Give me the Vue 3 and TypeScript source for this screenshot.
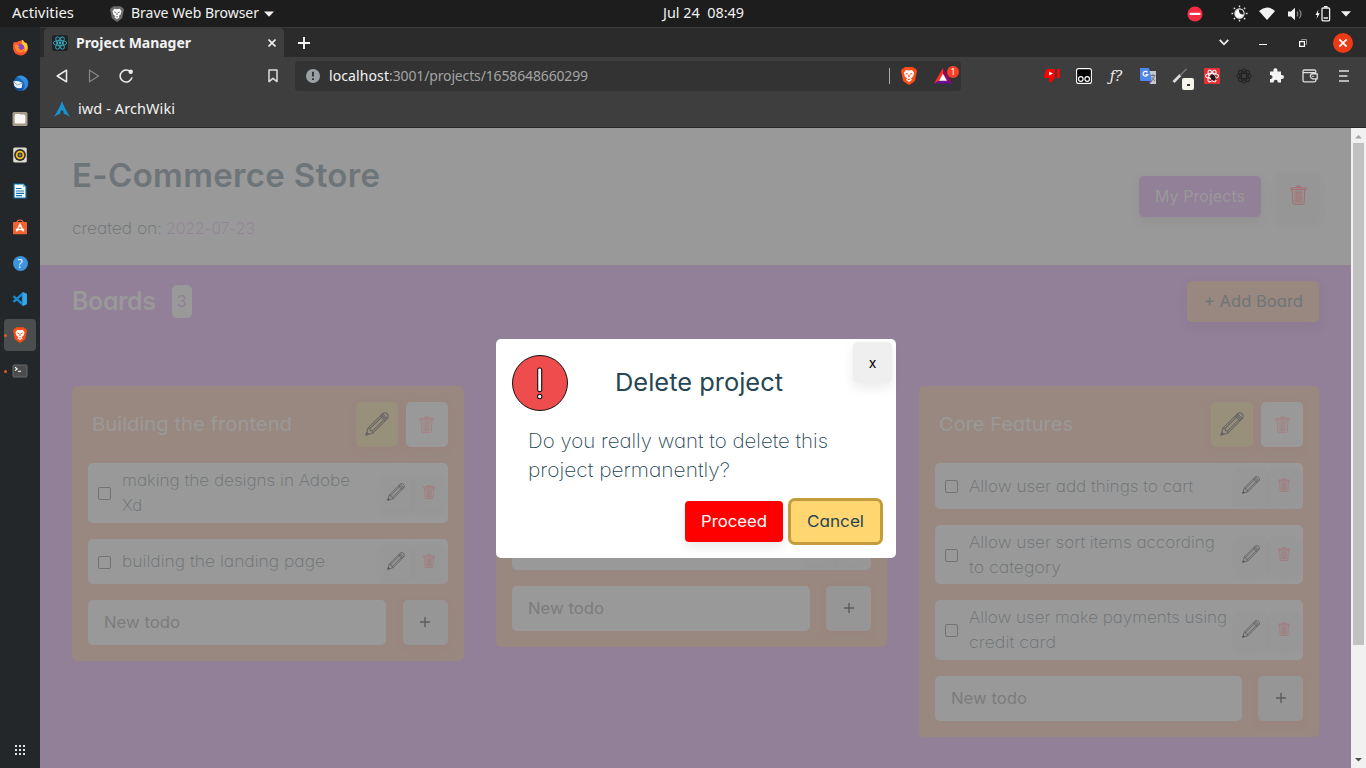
<script setup lang="ts">
interface Line { text: string; width: number }
interface Task { lines: Line[]; height: number }
interface Board { id: number; title: Line | null; tasks: Task[]; inputWidth: number }

const boards: Board[] = [
  {
    id: 1,
    title: { text: 'Building the frontend', width: 200 },
    inputWidth: 298,
    tasks: [
      { height: 60, lines: [{ text: 'making the designs in Adobe', width: 228 }, { text: 'Xd', width: 20 }] },
      { height: 45, lines: [{ text: 'building the landing page', width: 203 }] },
    ],
  },
  {
    id: 2,
    title: null,
    inputWidth: 298,
    tasks: [
      { height: 46, lines: [] },
      { height: 45, lines: [] },
    ],
  },
  {
    id: 3,
    title: { text: 'Core Features', width: 134 },
    inputWidth: 307,
    tasks: [
      { height: 46, lines: [{ text: 'Allow user add things to cart', width: 224 }] },
      { height: 59, lines: [{ text: 'Allow user sort items according', width: 246 }, { text: 'to category', width: 92 }] },
      { height: 60, lines: [{ text: 'Allow user make payments using', width: 258 }, { text: 'credit card', width: 87 }] },
    ],
  },
]

const vFit = {
  mounted(el: HTMLElement, binding: { value: number }) {
    const count = (el.textContent || '').length
    el.style.display = 'inline-block'
    const natural = el.getBoundingClientRect().width
    const ratio = binding.value / natural
    if (ratio > 1.02) {
      el.style.transformOrigin = '0 50%'
      el.style.transform = `scaleX(${ratio.toFixed(4)})`
      el.style.marginRight = `${(binding.value - natural).toFixed(2)}px`
    } else if (count > 1) {
      el.style.letterSpacing = `${((binding.value - natural) / (count - 1)).toFixed(3)}px`
    }
  },
}
</script>

<template>
  <div class="desktop">
    <svg class="defs" width="0" height="0">
      <symbol id="trash" viewBox="0 0 16 19">
        <g fill="none" stroke="currentColor" stroke-width=".9">
          <path d="M.6 4.3V3.2Q.6 2.6 1.3 2.6H14.7Q15.4 2.6 15.4 3.2V4.3ZM5.5 2.4Q5.6.7 8 .7T10.5 2.4M1.9 4.5 2.8 17.2Q2.9 18.3 3.9 18.3H12.1Q13.1 18.3 13.2 17.2L14.1 4.5" />
          <path d="M4.6 6.4 5 16.3H6.4L6.2 6.4ZM7.3 6.4V16.3H8.7V6.4ZM9.8 6.4 9.6 16.3H11L11.4 6.4Z" stroke-width=".6" />
        </g>
      </symbol>
      <symbol id="pencil" viewBox="0 0 24 24">
        <g fill="none" stroke="currentColor" stroke-width="1.05" stroke-linejoin="round">
          <path d="M1 23 3 16 17.4 1.8Q18.6.6 20 .8 22.8 1.4 23.2 4 23.4 5.4 22.2 6.6L8 21ZM3 16 5 16.6 5.4 18.6 7.4 19 8 21M5 16.6 17.2 4.6M7.4 19 19.4 7M15.2 4 20 8.8M16.4 2.8 21.2 7.6M17.6 1.8 22.2 6.4" />
          <path d="M1 23 1.8 20.3 3.7 22.2Z" fill="currentColor" />
        </g>
      </symbol>
      <symbol id="lion" viewBox="0 0 16 18">
        <path d="M4 0H12L13.6 1.6 15 1.8 16 4.6 15.4 6.4 14 13.4Q13.6 14.6 8 18 2.4 14.6 2 13.4L.6 6.4 0 4.6 1 1.8 2.4 1.6Z" fill="currentColor" />
        <path d="M5 3 8 3.5 11 3 13.2 5.8 11.9 9.8 9.8 11.3 11 12.7 8 15 5 12.7 6.2 11.3 4.1 9.8 2.8 5.8Z" fill="#fff" />
        <path d="M4.2 6 7 6.6 6.2 8ZM11.8 6 9 6.6 9.8 8ZM7.6 7.3H8.4L8.8 9.7 8 10.3 7.2 9.7ZM6.2 12.4 8 11.5 9.8 12.4 8 13Z" fill="currentColor" />
      </symbol>
    </svg>

    <header class="topbar">
      <span class="activities"><b v-fit="62">Activities</b></span>
      <svg class="lion-gray" width="14" height="16"><use href="#lion" /></svg>
      <span class="appname"><b v-fit="128">Brave Web Browser</b></span>
      <svg class="appcaret" width="10" height="6"><path d="M0 .5H10L5 5.8Z" fill="#f2f2f2" /></svg>
      <span class="clock"><b v-fit="81">Jul 24&nbsp; 08:49</b></span>
      <div class="tray">
        <span class="cell dnd"><svg width="16" height="16"><circle cx="8" cy="8" r="7.6" fill="#f22c42" /><rect x="2.6" y="6.8" width="10.8" height="2.2" fill="#fff" /></svg></span>
        <span class="cell"><svg width="17" height="17"><circle cx="8.5" cy="8.5" r="4.6" fill="none" stroke="#eee" stroke-width="1.1" /><path d="M8 4.5A4.2 4.2 0 1 0 12.5 9.5 4 4 0 0 1 8 4.5Z" fill="#fff" /><path d="M8.5 .5V2.2M8.5 14.8V16.5M.5 8.5H2.2M14.8 8.5H16.5M2.8 2.8 4 4M13 13 14.2 14.2M2.8 14.2 4 13M13 4 14.2 2.8" stroke="#ddd" stroke-width="1.4" /></svg></span>
        <span class="cell"><svg width="16" height="14"><path d="M0 4Q8-3 16 4L8 13Z" fill="#f4f4f4" /></svg></span>
        <span class="cell"><svg width="16" height="14"><path d="M1 4.5H4L8 .8V13.2L4 9.5H1Z" fill="#f4f4f4" /><path d="M10 4.6Q11.5 7 10 9.4M12.4 2.8Q15.5 7 12.4 11.2" fill="none" stroke="#888" stroke-width="1.2" /></svg></span>
        <span class="cell"><svg width="16" height="16"><path d="M3.5 3.5.5 9H2.4L1.4 13 4.8 7.2H2.8Z" fill="#fff" /><rect x="7" y="2" width="7.6" height="12.8" rx="1" fill="none" stroke="#eee" stroke-width="1.3" /><path d="M9 .7H12.6M8.6 12H13" stroke="#eee" stroke-width="1.6" /></svg></span>
        <span class="cell narrow"><svg width="10" height="6"><path d="M0 .3H10L5 5.6Z" fill="#f2f2f2" /></svg></span>
      </div>
    </header>

    <div class="workspace">
      <nav class="dock">
        <span class="app"><svg width="17" height="17"><circle cx="8.5" cy="9.2" r="7.3" fill="#ff5c2c" /><path d="M1 5Q2.5 2 3 3L5 4Q8 1 11 1L13 4Q17 7 15.6 11 13 17 8 16 1 15 1 5Z" fill="#ff552f" /><path d="M10 1Q11 .8 12 3L15 4.6Q17 11 12 13 14 8 10.5 6.2 9 3.5 10 1Z" fill="#ffcb2d" /><circle cx="8.5" cy="8.6" r="3.6" fill="#8b44c6" /><path d="M2.6 6Q5 4.5 7.5 7.4L6 8.4 8 10.4Q11 11.4 12.4 9 12.6 14 7.5 13.6 3 12 2.6 6Z" fill="#ff8c25" /><path d="M2 11Q5 15.8 10 14.8 6 17 2 11Z" fill="#ed275e" /></svg></span>
        <span class="app"><svg width="17" height="17"><circle cx="9" cy="8.5" r="7.5" fill="#1766bb" /><path d="M4 2Q10-2 15 4 18 12 11 15.6 15 10 10 5 7 2 4 2Z" fill="#368fe2" /><path d="M1.4 6.6Q6 5 10.4 8L9.6 13Q5 14 2.4 11Z" fill="#eef3f8" /><path d="M1.4 6.6 5.5 10 10.4 8" fill="none" stroke="#8aa5bc" /><path d="M2 11.5Q6 15.4 10.6 12.5L9 16Q4 16 2 11.5Z" fill="#154b94" /></svg></span>
        <span class="app"><svg width="16" height="16"><rect x=".5" y="1" width="15" height="14" rx="1.5" fill="#a69c87" /><rect x="2.6" y="3.6" width="10.8" height="9" rx="1.6" fill="#f7f6f3" /><path d="M3 3H8V5H3Z" fill="#f7f6f3" /></svg></span>
        <span class="app"><svg width="16" height="16"><rect x="1.2" y=".5" width="13.6" height="15" rx="1.6" fill="#dedbd0" /><circle cx="8" cy="8" r="5.9" fill="#302f2d" /><circle cx="8" cy="8" r="3.4" fill="none" stroke="#f4bd20" stroke-width="1.8" /><circle cx="8" cy="8" r="1.5" fill="#777" /></svg></span>
        <span class="app"><svg width="16" height="16"><path d="M2 1H11L14 4V15H2Z" fill="#fff" stroke="#0870af" stroke-width="1.2" /><path d="M11 .5V4H14.5Z" fill="#68b4de" /><path d="M4 5.5H9.5M4 8H12M4 10.3H12M4 12.6H10" stroke="#0870af" stroke-width="1.2" /></svg></span>
        <span class="app"><svg width="16" height="16"><path d="M4.5 4Q5 1 8 1T11.5 4" fill="none" stroke="#e86a40" stroke-width="1.2" /><rect x="1" y="3" width="14" height="12.2" rx="1" fill="#f26332" /><path d="M4.5 12.5 8 5.5 11.5 12.5M3.8 10.4H12.2" fill="none" stroke="#fff" stroke-width="1.5" /></svg></span>
        <span class="app"><i class="help">?</i></span>
        <span class="app"><svg width="16" height="16"><path d="M1.4 10.8 11 2.4V13.6L1.4 5.2" fill="none" stroke="#168bd0" stroke-width="2.4" stroke-linejoin="round" /><path d="M10.8 1V15L14.9 13.3V2.7Z" fill="#35a7ee" /></svg></span>
        <span class="app active"><svg class="lion-orange" width="14" height="16"><use href="#lion" /></svg></span>
        <span class="app running"><svg width="16" height="14"><rect x="1" y="1" width="14" height="12" rx="1" fill="#4c4c4c" stroke="#686868" /><path d="M3 3.2 5.2 4.9 3 6.6M6 7.2H9" fill="none" stroke="#fff" stroke-width="1.1" /></svg></span>
        <svg class="launcher" width="10" height="10" fill="#e2e2e2"><path d="M0 0h2v2H0zM4 0h2v2H4zM8 0h2v2H8zM0 4h2v2H0zM4 4h2v2H4zM8 4h2v2H8zM0 8h2v2H0zM4 8h2v2H4zM8 8h2v2H8z" /></svg>
      </nav>

      <div class="browser">
        <div class="tabs">
          <div class="tab">
            <svg width="16" height="16"><rect width="16" height="16" rx="2" fill="#202428" /><g fill="none" stroke="#3aa5b8" stroke-width=".9"><ellipse cx="8" cy="8" rx="6.8" ry="2.6" /><ellipse cx="8" cy="8" rx="6.8" ry="2.6" transform="rotate(60 8 8)" /><ellipse cx="8" cy="8" rx="6.8" ry="2.6" transform="rotate(120 8 8)" /></g><circle cx="8" cy="8" r="1.4" fill="#3aa5b8" /></svg>
            <span class="tabname"><b v-fit="115">Project Manager</b></span>
            <svg class="tabclose" width="8" height="8"><path d="M.5.5 7.5 7.5M7.5.5.5 7.5" stroke="#eee" stroke-width="1.6" /></svg>
          </div>
          <svg class="newtab" width="12" height="12"><path d="M6 0V12M0 6H12" stroke="#fff" stroke-width="1.8" /></svg>
          <div class="winbtns">
            <span class="chevron"><svg width="10" height="7"><path d="M.7.8 5 5.3 9.3.8" fill="none" stroke="#eee" stroke-width="1.8" /></svg></span>
            <span class="minimise"><svg width="8" height="2"><rect width="8" height="1" fill="#fff" /></svg></span>
            <span><svg width="8" height="8"><path d="M2.5 1.5V.5H7.5V5.5H6.5" fill="none" stroke="#999" /><rect x=".6" y="2.6" width="4.8" height="4.8" fill="none" stroke="#fff" stroke-width="1.2" /></svg></span>
            <span><svg width="20" height="20"><circle cx="10" cy="10" r="10" fill="#f03a17" /><path d="M6.3 6.3 13.7 13.7M13.7 6.3 6.3 13.7" stroke="#fff" stroke-width="1.7" /></svg></span>
          </div>
        </div>

        <div class="toolbar">
          <span class="tool"><svg width="12" height="14"><path d="M10.5 1.2V12.8L1.2 7Z" fill="none" stroke="#eee" stroke-width="1.5" stroke-linejoin="round" /></svg></span>
          <span class="tool"><svg width="12" height="14"><path d="M1.5 1.2V12.8L10.5 7Z" fill="none" stroke="#888" stroke-width="1.2" stroke-linejoin="round" /></svg></span>
          <span class="tool"><svg width="14" height="14"><path d="M12 3.5A6 6 0 1 0 13 8.4" fill="none" stroke="#eee" stroke-width="1.5" /><circle cx="11.7" cy="2.8" r="2.2" fill="#eee" /></svg></span>
          <span class="tool mark"><svg width="10" height="14"><path d="M1 1H9V12.6L5 9.3 1 12.6Z" fill="none" stroke="#ddd" stroke-width="1.5" stroke-linejoin="round" /></svg></span>
          <div class="urlbar">
            <svg width="14" height="14"><circle cx="7" cy="7" r="7" fill="#9aa0a6" /><path d="M7 2.8V7.6M7 9.2V11" stroke="#333" stroke-width="1.9" /></svg>
            <span class="url"><b class="host" v-fit="60">localhost</b><b v-fit="199">:3001/projects/1658648660299</b></span>
            <i class="divider" />
            <svg class="lion-orange shield" width="16" height="18"><use href="#lion" /></svg>
            <span class="bat"><svg width="18" height="16"><path d="M9 0 0 15.5 5 13 9 6Z" fill="#ff3020" /><path d="M9 0 18 15.5 13 13 9 6Z" fill="#a00068" /><path d="M0 15.5 5 12.7H13L18 15.5Z" fill="#68109a" /><path d="M9 5.8 5 12.8H13Z" fill="#fff" /></svg><em>1</em></span>
          </div>
          <div class="extensions">
            <span><svg width="16" height="15"><path d="M3 1H11V9.5L7 14.5Q4 15 5.5 10H1Q-.5 8 1.5 3Z" fill="#f00" /><path d="M5 3.5 9 5.5 5 7.6Z" fill="#fff" /><rect x="13" y="1" width="3" height="9" fill="#f00" /></svg></span>
            <span><svg width="16" height="16"><rect x=".6" y=".6" width="14.8" height="14.8" rx="2" fill="#000" stroke="#fff" stroke-width="1.1" /><g fill="none" stroke="#fff" stroke-width="1.2"><circle cx="4.8" cy="11" r="2.3" /><circle cx="11.2" cy="11" r="2.3" /></g></svg></span>
            <span><i class="fq">ƒ?</i></span>
            <span><svg width="16" height="16"><path d="M7 3H16V16H10Z" fill="#c6c9ca" /><path d="M0 0H9L12 13H1Q0 13 0 12Z" fill="#4f87ed" /><path d="M9 13H12L9.5 16Z" fill="#6140c0" /><path d="M7.5 4.4A2.4 2.4 0 1 0 7.8 6.6H5.6" fill="none" stroke="#fff" stroke-width="1.2" /><path d="M10.5 7.5H15.5M13 6V7.5M14.6 7.5Q14 11 11.5 13M11.8 9 14.8 13" stroke="#64737d" fill="none" stroke-width=".9" /></svg></span>
            <span class="probe"><svg width="16" height="16"><path d="M1.5 14 8.5 7" stroke="#ddd" stroke-width="2.6" /><path d="M8 7.5 14.5 1" stroke="#777" stroke-width="1.6" /></svg><em /></span>
            <span><svg width="16" height="16"><rect width="16" height="16" rx="1" fill="#e72e34" /><g fill="none" stroke="#fff" stroke-width="1.1"><ellipse cx="8" cy="8" rx="6.5" ry="2.5" /><ellipse cx="8" cy="8" rx="6.5" ry="2.5" transform="rotate(60 8 8)" /><ellipse cx="8" cy="8" rx="6.5" ry="2.5" transform="rotate(120 8 8)" /></g><ellipse cx="9" cy="9.5" rx="2.3" ry="3.2" fill="#241a1a" transform="rotate(-30 9 9.5)" /><path d="M5.5 8.5 13 11.5M6.5 13 12 6.5" stroke="#241a1a" /></svg></span>
            <span><svg width="16" height="16"><g fill="none" stroke="#202020" stroke-width="1"><ellipse cx="8" cy="8" rx="7.3" ry="2.8" /><ellipse cx="8" cy="8" rx="7.3" ry="2.8" transform="rotate(45 8 8)" /><ellipse cx="8" cy="8" rx="7.3" ry="2.8" transform="rotate(90 8 8)" /><ellipse cx="8" cy="8" rx="7.3" ry="2.8" transform="rotate(135 8 8)" /></g></svg></span>
            <span><svg width="15" height="15"><path d="M1 3.5H4.5Q4 .3 6.4.3T8.4 3.5H12V7Q15 6.6 15 9T12 11V14.5H8.7Q9 11.8 6.8 11.8T4.6 14.5H1V11Q3.6 11 3.6 9T1 7Z" fill="#f4f4f4" /></svg></span>
            <span class="wallet"><svg width="16" height="14"><path d="M13.8 3.5V2.4Q13.8 1 12.4 1H2.5Q1 1 1 2.4V11.4Q1 12.8 2.4 12.8H12.4Q13.8 12.8 13.8 11.4V10.2M1.5 3.6H12.4Q13.8 3.6 13.8 4.6M15.2 4.8H10.4Q8.4 4.8 8.4 7.1T10.4 9.8H15.2ZM10.2 7.3H11.6" fill="none" stroke="#ddd" stroke-width="1.3" /></svg></span>
            <span><svg width="10" height="12"><path d="M0 1H10M0 6H8.5M0 11H10" stroke="#ddd" stroke-width="1.7" /></svg></span>
          </div>
        </div>

        <div class="bookmarks">
          <svg width="16" height="16"><path d="M8 0Q6.5 5 0 16 4 13.2 6.3 12.8 6.2 9.4 8 9.2T9.7 12.8Q12 13.2 16 16 9.5 5 8 0Z" fill="#1793d1" /></svg>
          <span><b v-fit="97">iwd - ArchWiki</b></span>
        </div>

        <div class="viewport">
          <main class="page">
            <section class="project">
              <div class="about">
                <h1><span v-fit="308">E-Commerce Store</span></h1>
                <p><span v-fit="90">created on:</span><span class="date" v-fit="89">2022-07-23</span></p>
              </div>
              <button class="btn purple"><span v-fit="90">My Projects</span></button>
              <button class="bin"><svg width="17" height="20"><use href="#trash" /></svg></button>
            </section>

            <section class="boards">
              <div class="boardbar">
                <h2><span v-fit="84">Boards</span></h2>
                <span class="count">3</span>
                <button class="btn tan"><span v-fit="99">+ Add Board</span></button>
              </div>
              <div class="grid">
                <article v-for="board in boards" :key="board.id" class="board">
                  <div class="boardhead">
                    <h3><span v-if="board.title" v-fit="board.title.width">{{ board.title.text }}</span></h3>
                    <button class="square edit"><svg width="24" height="24"><use href="#pencil" /></svg></button>
                    <button class="square"><svg width="15" height="17"><use href="#trash" /></svg></button>
                  </div>
                  <div v-for="(task, i) in board.tasks" :key="i" class="task" :style="{ height: `${task.height}px` }">
                    <i class="check" />
                    <div class="lines">
                      <span v-for="line in task.lines" :key="line.text" v-fit="line.width">{{ line.text }}</span>
                    </div>
                    <i class="small pen"><svg width="18" height="18"><use href="#pencil" /></svg></i>
                    <i class="small del"><svg width="12" height="14"><use href="#trash" /></svg></i>
                  </div>
                  <div class="add">
                    <div class="field" :style="{ width: `${board.inputWidth}px` }"><span v-fit="76">New todo</span></div>
                    <button class="plus"><svg width="10" height="10"><path d="M5 0V10M0 5H10" stroke="#5c5c5c" stroke-width="1.4" /></svg></button>
                  </div>
                </article>
              </div>
            </section>
          </main>

          <div class="scrollbar">
            <svg width="15" height="15"><path d="M4 10.5H11L7.5 7Z" fill="#a3a3a3" /></svg>
            <i class="thumb" />
            <svg class="down" width="15" height="15"><path d="M4 5H11L7.5 8.5Z" fill="#505050" /></svg>
          </div>

          <div class="overlay">
            <div class="modal" role="dialog">
              <button class="close">x</button>
              <div class="modalhead">
                <svg width="56" height="56"><circle cx="28" cy="28" r="27.5" fill="#ef4d4d" stroke="#111" /><rect x="25.7" y="13" width="4" height="23.6" rx="1.6" fill="#fff" stroke="#111" stroke-width="1.1" /><circle cx="27.7" cy="41.5" r="2.2" fill="#fff" stroke="#111" stroke-width="1.1" /></svg>
                <h4><span v-fit="168">Delete project</span></h4>
              </div>
              <p class="ask">
                <span v-fit="300">Do you really want to delete this</span>
                <span v-fit="202">project permanently?</span>
              </p>
              <div class="actions">
                <button class="proceed"><span v-fit="66">Proceed</span></button>
                <button class="cancel"><span v-fit="57">Cancel</span></button>
              </div>
            </div>
          </div>
        </div>
      </div>
    </div>
  </div>
</template>

<style>
body { margin: 0; overflow: hidden; }
</style>

<style scoped>
* { box-sizing: border-box; margin: 0; padding: 0; }
.desktop { width: 1366px; height: 768px; overflow: hidden; display: flex; flex-direction: column; background: #1d1d1d; font-family: "Noto Sans", "Open Sans", sans-serif; font-size: 14.5px; color: #f2f2f2; }
svg { display: block; flex: none; }
.defs { position: absolute; }
button { border: 0; font: inherit; font-feature-settings: inherit; display: flex; align-items: center; justify-content: center; flex: none; }
b { display: inline-block; font-weight: 400; white-space: pre; }
.lion-orange { color: #fb4d17; }

.topbar { height: 27px; flex: none; display: flex; align-items: center; padding-left: 12px; line-height: 25px; font-size: 14px; }
.activities { width: 98px; height: 27px; }
.lion-gray { color: #6b6b6b; margin-right: 7px; }
.appname { width: 128px; height: 27px; }
.appcaret { margin: 1px 0 0 5px; }
.clock { margin-left: 389px; height: 27px; }
.tray { margin-left: auto; display: flex; padding-right: 11px; }
.cell { width: 28px; height: 26px; display: flex; align-items: center; justify-content: center; }
.cell.narrow { width: 18px; }
.dnd { margin-right: 16px; }

.workspace { flex: 1; display: flex; min-height: 0; }
.dock { width: 40px; background: #232729; display: flex; flex-direction: column; align-items: center; gap: 4px; padding-top: 4px; }
.app { position: relative; width: 32px; height: 32px; flex: none; display: flex; align-items: center; justify-content: center; border-radius: 4px; }
.active { background: #4b4e4e; }
.active::before, .running::before { content: ""; position: absolute; left: 0; top: 15px; width: 3px; height: 3px; border-radius: 2px; background: #e95420; }
.help { width: 15px; height: 15px; border-radius: 8px; background: #3b94dc; color: #fff; text-align: center; font: 12px/15px "Open Sans", sans-serif; }
.launcher { margin: auto 0 13px; }

.browser { width: 1326px; display: flex; flex-direction: column; background: #3e3e3e; }
.tabs { height: 30px; flex: none; display: flex; align-items: center; background: #2b2b2b; border-top: 1px solid #3b3b3b; padding-left: 4px; }
.tab { width: 240px; height: 29px; display: flex; align-items: center; background: #3e3e3e; border-radius: 4px 4px 0 0; padding-left: 8px; }
.tabname { margin-left: 8px; height: 28px; line-height: 26px; }
.tabname b { font-weight: 700; font-size: 14px; }
.tabclose { margin: 0 8px 0 auto; }
.newtab { margin-left: 14px; }
.winbtns { margin-left: auto; display: flex; padding-right: 3px; }
.winbtns span { width: 40px; height: 29px; display: flex; align-items: center; justify-content: center; }
.winbtns .chevron { padding-left: 2px; }
.minimise svg { margin-top: 4px; }

.toolbar { height: 37px; flex: none; display: flex; align-items: center; padding-left: 6px; }
.tool { width: 32px; display: flex; justify-content: center; }
.mark { margin: 0 6px 0 115px; }
.urlbar { width: 666px; height: 30px; display: flex; align-items: center; background: #333; border-radius: 4px; padding-left: 11px; }
.url { margin-left: 9px; font-size: 14px; line-height: 30px; color: #a4a4a4; white-space: nowrap; }
.url .host { color: #f4f4f4; }
.divider { width: 1px; height: 16px; background: #aaa; margin-left: auto; }
.shield { margin: 0 17px 0 11px; }
.bat { position: relative; margin-right: 9px; }
.bat em { position: absolute; left: 13px; top: -2px; width: 12px; height: 12px; border-radius: 6px; background: #fb4029; color: #fff; font: 9px/12px "Noto Sans", sans-serif; text-align: center; }
.extensions { margin-left: auto; display: flex; padding-right: 6px; }
.extensions span { position: relative; width: 32px; height: 20px; display: flex; align-items: center; justify-content: center; }
.extensions .wallet { width: 36px; }
.fq { font: italic 17px/18px "DejaVu Serif", serif; font-size: 14px; color: #eee; }
.probe em { position: absolute; left: 18px; top: 12px; width: 12px; height: 12px; border-radius: 2px; background: #f7f5ec; }
.probe em::after { content: ""; position: absolute; left: 5px; top: 6px; width: 3px; height: 2px; background: #333; }
.bookmarks { height: 34px; flex: none; display: flex; align-items: flex-start; border-bottom: 1px solid #272727; padding: 7px 0 0 14px; }
.bookmarks span { margin: -3px 0 0 8px; line-height: 20px; }

.viewport { position: relative; flex: 1; display: flex; font-family: Inter, "Open Sans", sans-serif; font-feature-settings: "cv11"; font-size: 16px; }
.page { width: 1311px; background: #927f98; }
.page span, .modal span { white-space: nowrap; }
.project { height: 137px; background: #999; padding: 22px 32px 0; display: flex; align-items: flex-start; }
h1 { font-size: 33px; line-height: 50px; font-weight: 600; color: #6e7579; }
.about p { margin-top: 16px; line-height: 24px; font-size: 16px; font-weight: 200; color: #6e7375; display: flex; gap: 4px; }
.date { color: #927f98; }
.btn { height: 41px; padding-bottom: 1px; border-radius: 5px; box-shadow: 0 5px 12px rgba(90, 90, 90, .1); }
.purple { width: 122px; margin: 26px 16px 0 auto; background: #927f98; color: #999; }
.bin { width: 42px; height: 46px; margin-top: 24px; padding-bottom: 4px; border-radius: 5px; background: #969696; box-shadow: 0 4px 10px rgba(90, 90, 90, .07); color: #a8696c; }
.boards { padding: 16px 32px 0; }
.boardbar { height: 41px; display: flex; align-items: center; }
h2 { font-size: 25px; line-height: 40px; font-weight: 600; color: #999; padding-bottom: 2px; }
.count { width: 20px; height: 33px; line-height: 32px; margin-left: 16px; border-radius: 5px; background: #999; color: #927f98; text-align: center; }
.tan { width: 132px; margin-left: auto; background: #99887f; color: #6e7579; }
.grid { margin-top: 64px; display: grid; grid-template-columns: 391.5px 391.5px 400px; gap: 32px; align-items: start; }
.board { background: #99887f; border-radius: 5px; padding: 16px; display: flex; flex-direction: column; gap: 16px; }
.boardhead { height: 45px; display: flex; align-items: center; gap: 8px; }
h3 { flex: 1; padding-left: 4px; font-size: 19px; line-height: 45px; font-weight: 400; color: #999; }
.square { width: 42px; height: 45px; border-radius: 5px; background: #999; color: #a97a7e; box-shadow: 0 3px 7px rgba(155, 115, 120, .18); }
.square svg { margin-bottom: 1px; }
.edit { background: #98907b; color: #646464; }
.task { border-radius: 5px; background: #999; display: flex; align-items: center; padding: 0 6px 0 10px; overflow: hidden; }
.check { width: 13px; height: 13px; flex: none; border: 1px solid #737373; border-radius: 2px; margin-top: 1px; }
.lines { flex: 1; margin-left: 11px; display: flex; flex-direction: column; align-items: flex-start; line-height: 25px; font-weight: 200; color: #6c7275; }
.small { width: 28px; height: 34px; flex: none; display: flex; align-items: center; justify-content: center; border-radius: 4px; background: #979797; box-shadow: 0 3px 8px rgba(90, 90, 90, .06); }
.small svg { margin-bottom: 2px; }
.pen { color: #5c5c5c; margin-right: 6px; }
.del { color: #a97073; width: 26px; }
.add { display: flex; justify-content: space-between; height: 45px; }
.field { border-radius: 5px; background: #999; padding-left: 16px; line-height: 45px; color: #7c7c7c; }
.plus { width: 45px; height: 45px; padding-bottom: 1px; border-radius: 5px; background: #969696; box-shadow: 0 3px 7px rgba(155, 115, 120, .18); }

.scrollbar { width: 15px; background: #f1f1f1; display: flex; flex-direction: column; align-items: center; }
.thumb { width: 11px; height: 502px; background: #c1c1c1; }
.down { margin-top: auto; }

.overlay { position: absolute; inset: 0 15px 0 0; padding: 211px 0 0 456px; }
.modal { position: relative; width: 400px; height: 219px; border-radius: 5px; background: #fff; padding: 16px; color: #264653; }
.close { position: absolute; right: 4px; top: 3px; width: 39px; height: 41px; padding-bottom: 1px; border-radius: 5px; background: #efefef; color: #000; font-size: 14px; box-shadow: 0 5px 12px rgba(0, 0, 0, .08); }
.modalhead { display: flex; align-items: center; height: 56px; }
h4 { margin-left: 47px; padding-bottom: 2px; font-size: 24.5px; line-height: 56px; font-weight: 400; }
.ask { margin-top: 16px; padding-left: 15.5px; height: 58px; display: flex; flex-direction: column; align-items: flex-start; font-size: 20px; line-height: 29px; font-weight: 200; }
.actions { margin-top: 13px; display: flex; align-items: center; justify-content: flex-end; gap: 5px; margin-right: -3px; }
.proceed { width: 98px; height: 41px; padding-bottom: 1px; border-radius: 4px; background: #f00; color: #fff; box-shadow: 0 5px 12px rgba(0, 0, 0, .09); }
.cancel { width: 95px; height: 47px; padding-bottom: 1px; border-radius: 7px; border: 3px solid #c49c3c; background: #ffd670; color: #264653; }
</style>
